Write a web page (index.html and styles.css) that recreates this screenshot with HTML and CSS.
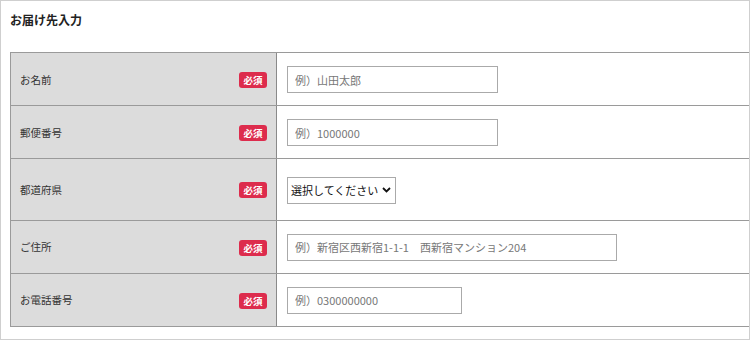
FILE: index.html
```html
<!DOCTYPE html>
<html lang="ja">
<head>
    <meta charset="UTF-8">
    <meta name="viewport" content="width=device-width, initial-scale=1.0">
    <title>お届け先入力</title>
    <link rel="stylesheet" href="styles.css">
</head>
<body>
<div class="page">
    <h1 class="title">お届け先入力</h1>
    <div class="form-table">
        <div class="row">
            <div class="label">お名前<span class="badge">必須</span></div>
            <div class="field"><input type="text" class="input input-name" placeholder="例）山田太郎"></div>
        </div>
        <div class="row">
            <div class="label">郵便番号<span class="badge">必須</span></div>
            <div class="field"><input type="text" class="input input-name" placeholder="例）1000000"></div>
        </div>
        <div class="row row-select">
            <div class="label">都道府県<span class="badge">必須</span></div>
            <div class="field">
                <span class="select-wrap">
                    <select class="select">
                        <option>選択してください</option>
                    </select>
                    <svg class="chevron" width="9" height="6" viewBox="0 0 9 6"><path d="M1 1l3.5 3.5L8 1" fill="none" stroke="#111" stroke-width="1.8"/></svg>
                </span>
            </div>
        </div>
        <div class="row">
            <div class="label">ご住所<span class="badge">必須</span></div>
            <div class="field"><input type="text" class="input input-address" placeholder="例）新宿区西新宿1-1-1　西新宿マンション204"></div>
        </div>
        <div class="row row-last">
            <div class="label">お電話番号<span class="badge">必須</span></div>
            <div class="field"><input type="text" class="input input-tel" placeholder="例）0300000000"></div>
        </div>
    </div>
</div>
</body>
</html>
```

FILE: styles.css
```css
body {
    margin: 0;
    font-family: "Noto Sans CJK JP", "Liberation Sans", sans-serif;
    color: #222;
}
.page {
    width: 750px;
    height: 340px;
    box-sizing: border-box;
    border: 1px solid #cfcfcf;
    padding: 0 0 0 9px;
    overflow: hidden;
}
.title {
    margin: 0;
    padding-top: 10px;
    height: 41px;
    font-size: 12px;
    font-weight: bold;
    line-height: 18px;
}
.form-table {
    border-top: 1px solid #9a9a9a;
    border-left: 1px solid #9a9a9a;
}
.row {
    display: grid;
    grid-template-columns: 266px 1fr;
    border-bottom: 1px solid #9a9a9a;
}
.label {
    display: flex;
    align-items: center;
    justify-content: space-between;
    background-color: #dcdcdc;
    border-right: 1px solid #8a8a8a;
    padding: 0 9px 0 9px;
    font-size: 10.5px;
    color: #333;
}
.badge {
    display: inline-block;
    width: 28px;
    height: 16px;
    line-height: 16px;
    text-align: center;
    background-color: #dd2c4d;
    color: #fff;
    font-size: 9.5px;
    font-weight: bold;
    border-radius: 3px;
    margin-top: 2px;
}
.field {
    padding: 13px 10px 12px 10px;
    display: flex;
    align-items: center;
}
.row-select .field {
    padding: 17px 10px 16px 10px;
}
.row-last .field {
    padding: 13px 10px 12px 10px;
}
.input {
    height: 27px;
    box-sizing: border-box;
    border: 1px solid #aaa;
    padding: 0 7px;
    font-family: inherit;
    font-size: 11px;
    color: #333;
}
.input::placeholder {
    color: #777;
}
.input-name {
    width: 211px;
}
.input-address {
    width: 330px;
}
.input-tel {
    width: 175px;
}
.select-wrap {
    position: relative;
    display: inline-block;
}
.select {
    appearance: none;
    -webkit-appearance: none;
    width: 109px;
    height: 27px;
    box-sizing: border-box;
    border: 1px solid #aaa;
    border-radius: 0;
    background: #fff;
    padding: 0 0 0 3px;
    font-family: inherit;
    font-size: 11px;
    color: #111;
}
.chevron {
    position: absolute;
    left: 95px;
    top: 11px;
    pointer-events: none;
}
```
